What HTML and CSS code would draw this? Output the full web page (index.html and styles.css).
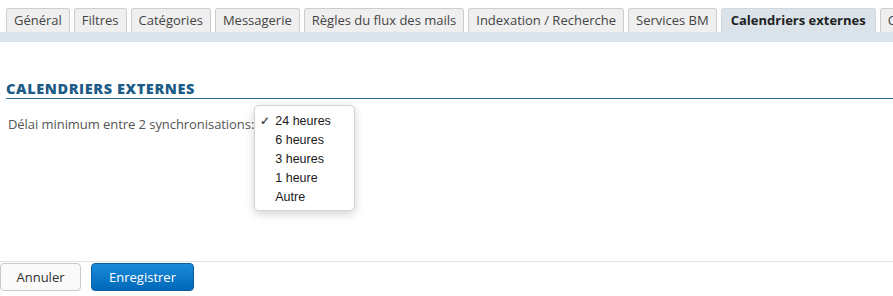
FILE: index.html
```html
<!DOCTYPE html>
<html lang="fr">
<head>
    <meta charset="UTF-8">
    <title>Calendriers externes</title>
    <link rel="stylesheet" href="styles.css">
</head>
<body>
    <div class="tabs">
        <div class="tab">Général</div>
        <div class="tab">Filtres</div>
        <div class="tab">Catégories</div>
        <div class="tab">Messagerie</div>
        <div class="tab">Règles du flux des mails</div>
        <div class="tab">Indexation / Recherche</div>
        <div class="tab">Services BM</div>
        <div class="tab active">Calendriers externes</div>
        <div class="tab">Comptes</div>
    </div>
    <div class="band"></div>

    <div class="content">
        <h2 class="section-title">Calendriers externes</h2>
        <div class="field">
            <span class="label">Délai minimum entre 2 synchronisations:</span>
            <div class="select-wrap">
                <ul class="popup">
                    <li class="checked"><span class="check">✓</span>24 heures</li>
                    <li><span class="check"></span>6 heures</li>
                    <li><span class="check"></span>3 heures</li>
                    <li><span class="check"></span>1 heure</li>
                    <li><span class="check"></span>Autre</li>
                </ul>
            </div>
        </div>
    </div>

    <div class="footer">
        <button class="btn">Annuler</button>
        <button class="btn primary">Enregistrer</button>
    </div>
</body>
</html>
```

FILE: styles.css
```css
* {
    box-sizing: border-box;
}

body {
    margin: 0;
    font-family: 'Open Sans', 'Liberation Sans', sans-serif;
    font-size: 13px;
    color: #555;
    background: #fff;
    width: 893px;
    height: 296px;
    overflow: hidden;
    display: flex;
    flex-direction: column;
}

.tabs {
    display: flex;
    gap: 4px;
    padding: 8px 0 0 6px;
    white-space: nowrap;
    overflow: hidden;
}

.tab {
    flex: none;
    height: 24px;
    line-height: 22px;
    padding: 0 7px;
    border: 1px solid #cdcdcd;
    border-bottom: none;
    border-radius: 3px 3px 0 0;
    background: #efefef;
    color: #444;
}

.tab.active {
    padding: 0 9px;
    background: #dae3e9;
    border-color: #d0d8de;
    color: #222;
    font-weight: 700;
}

.band {
    height: 10px;
    background: #dae3e9;
}

.content {
    flex: 1;
    padding: 0 0 0 6px;
}

.section-title {
    margin: 38px 0 0;
    padding-bottom: 1px;
    font-size: 14.5px;
    font-weight: 800;
    letter-spacing: 0.6px;
    color: #1d5c87;
    text-transform: uppercase;
    border-bottom: 1px solid #2a6d9a;
    line-height: 17px;
}

.field {
    display: flex;
    align-items: flex-start;
    padding: 16px 0 0 2px;
}

.label {
    line-height: 18px;
    letter-spacing: -0.06px;
}

.select-wrap {
    position: relative;
    width: 100px;
    height: 18px;
}

.popup {
    position: absolute;
    top: -10px;
    left: 0;
    width: 101px;
    margin: 0;
    padding: 6px 0 3px;
    list-style: none;
    background: #fff;
    border: 1px solid #d4d4d4;
    border-radius: 5px;
    box-shadow: 0 3px 10px rgba(0, 0, 0, 0.18);
    font-family: 'Liberation Sans', Arial, sans-serif;
    font-size: 12.5px;
    color: #1a1a1a;
}

.popup li {
    display: flex;
    height: 19px;
    line-height: 19px;
}

.check {
    width: 20px;
    padding-left: 5px;
    font-size: 12px;
}

.footer {
    display: flex;
    gap: 10px;
    border-top: 1px solid #dde3e6;
    padding: 1px 0 6px;
    height: 35px;
}

.btn {
    height: 28px;
    width: 81px;
    border: 1px solid #c9c9c9;
    border-radius: 4px;
    background: #fafafa;
    font-family: 'Open Sans', 'Liberation Sans', sans-serif;
    font-size: 13px;
    color: #333;
    cursor: pointer;
}

.btn.primary {
    width: 103px;
    border-color: #0a5fa3;
    background: linear-gradient(#1a8ada, #0068b9);
    color: #fff;
}
```
